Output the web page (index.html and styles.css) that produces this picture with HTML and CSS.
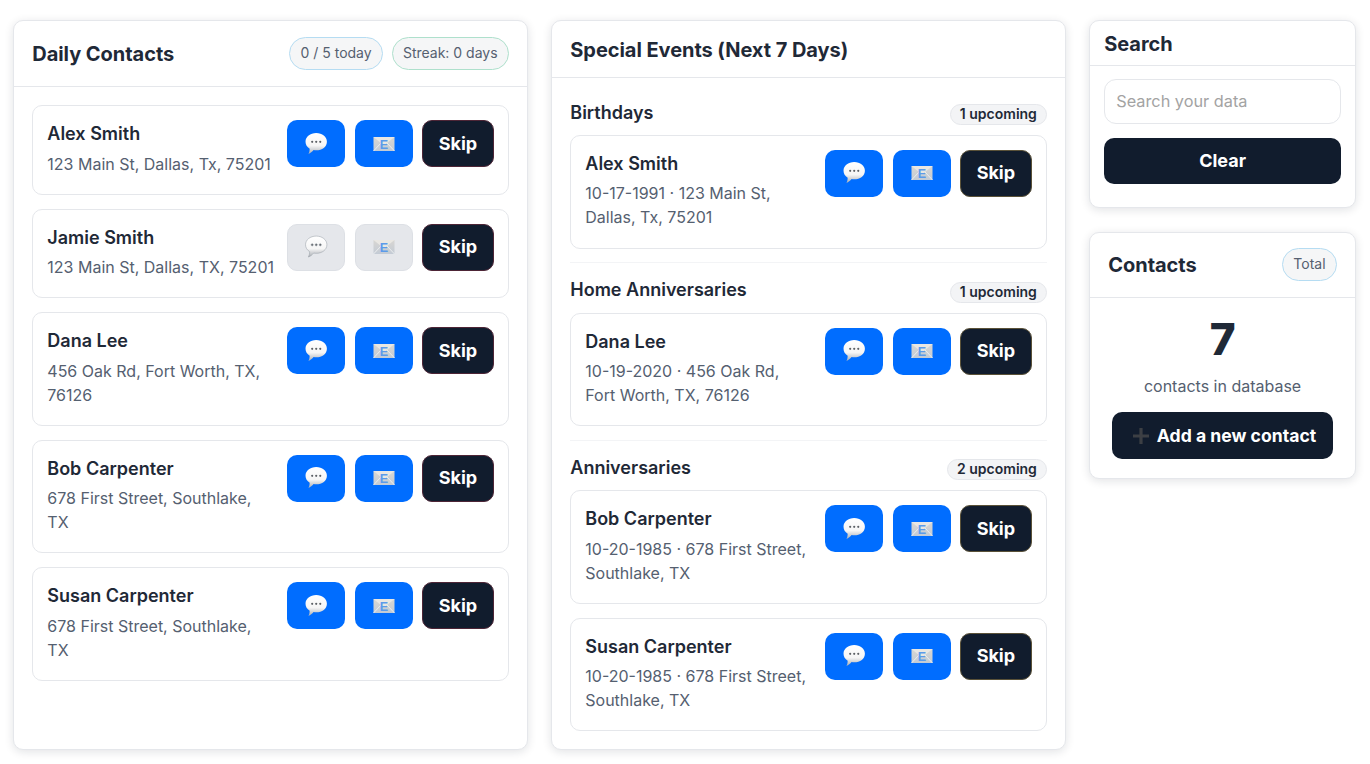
FILE: index.html
```html
<!DOCTYPE html>
<html lang="en">
<head>
    <title>Daily Contacts</title>
    <meta charset="utf-8">
    <meta name="viewport" content="width=device-width, initial-scale=1">
    <link rel="stylesheet" href="styles.css">
</head>
<body>
    <svg class="icon-defs" width="0" height="0" aria-hidden="true">
        <defs>
            <linearGradient id="bubble-fill" x1="0" y1="0" x2="0" y2="1">
                <stop offset="0" stop-color="#ffffff"/>
                <stop offset="0.6" stop-color="#f6f6f6"/>
                <stop offset="1" stop-color="#a9adb3"/>
            </linearGradient>
            <linearGradient id="envelope-fill" x1="0" y1="0" x2="0" y2="1">
                <stop offset="0" stop-color="#d8d6d2"/>
                <stop offset="1" stop-color="#c3cbd5"/>
            </linearGradient>
            <symbol id="icon-chat" viewBox="0 0 22 22">
                <path d="M11.200 1c5.500 0 9.800 3.400 9.800 7.900s-4.300 7.900-9.800 7.900c-.8 0-1.600-.1-2.400-.2-1.300 1.600-2.800 2.900-4.800 3.600.8-1.400 1.200-3 1.200-4.900C2.800 13.800 1.400 11.500 1.400 8.900 1.400 4.400 5.700 1 11.200 1z" fill="url(#bubble-fill)"/>
                <circle cx="7.500" cy="9" r="1" fill="#5d6166"/>
                <circle cx="11.200" cy="9" r="1" fill="#5d6166"/>
                <circle cx="14.900" cy="9" r="1" fill="#5d6166"/>
            </symbol>
            <symbol id="icon-mail" viewBox="0 0 22 16">
                <rect x="0.500" y="1" width="21" height="14" fill="url(#envelope-fill)"/>
                <path d="M0.500 1 11 9.500 21.500 1z" fill="#e9e7e3"/>
                <path d="M0.500 15 8 7M21.500 15 14 7" stroke="#eef0f2" stroke-width="0.900" fill="none"/>
                <text x="11" y="12.600" text-anchor="middle" class="icon-letter">E</text>
            </symbol>
        </defs>
    </svg>

    <main class="dashboard">
        <section class="card">
            <header class="card-head card-head-daily">
                <h2>Daily Contacts</h2>
                <div class="pills">
                    <span class="pill pill-blue">0 / 5 today</span>
                    <span class="pill pill-green">Streak: 0 days</span>
                </div>
            </header>
            <div class="card-body list">
                <article class="row">
                    <div class="info">
                        <div class="name">Alex Smith</div>
                        <div class="details">123 Main St, Dallas, Tx, 75201</div>
                    </div>
                    <div class="actions">
                        <button class="btn btn-icon"><svg class="chat"><use href="#icon-chat"/></svg></button>
                        <button class="btn btn-icon"><svg class="mail"><use href="#icon-mail"/></svg></button>
                        <button class="btn btn-skip">Skip</button>
                    </div>
                </article>
                <article class="row">
                    <div class="info">
                        <div class="name">Jamie Smith</div>
                        <div class="details">123 Main St, Dallas, TX, 75201</div>
                    </div>
                    <div class="actions">
                        <button class="btn btn-icon is-off"><svg class="chat"><use href="#icon-chat"/></svg></button>
                        <button class="btn btn-icon is-off"><svg class="mail"><use href="#icon-mail"/></svg></button>
                        <button class="btn btn-skip">Skip</button>
                    </div>
                </article>
                <article class="row">
                    <div class="info">
                        <div class="name">Dana Lee</div>
                        <div class="details">456 Oak Rd, Fort Worth, TX, 76126</div>
                    </div>
                    <div class="actions">
                        <button class="btn btn-icon"><svg class="chat"><use href="#icon-chat"/></svg></button>
                        <button class="btn btn-icon"><svg class="mail"><use href="#icon-mail"/></svg></button>
                        <button class="btn btn-skip">Skip</button>
                    </div>
                </article>
                <article class="row">
                    <div class="info">
                        <div class="name">Bob Carpenter</div>
                        <div class="details">678 First Street, Southlake, TX</div>
                    </div>
                    <div class="actions">
                        <button class="btn btn-icon"><svg class="chat"><use href="#icon-chat"/></svg></button>
                        <button class="btn btn-icon"><svg class="mail"><use href="#icon-mail"/></svg></button>
                        <button class="btn btn-skip">Skip</button>
                    </div>
                </article>
                <article class="row">
                    <div class="info">
                        <div class="name">Susan Carpenter</div>
                        <div class="details">678 First Street, Southlake, TX</div>
                    </div>
                    <div class="actions">
                        <button class="btn btn-icon"><svg class="chat"><use href="#icon-chat"/></svg></button>
                        <button class="btn btn-icon"><svg class="mail"><use href="#icon-mail"/></svg></button>
                        <button class="btn btn-skip">Skip</button>
                    </div>
                </article>
            </div>
        </section>

        <section class="card">
            <header class="card-head card-head-events">
                <h2>Special Events (Next 7 Days)</h2>
            </header>
            <div class="card-body events">
                <div class="event-group">
                    <div class="group-head">
                        <h3>Birthdays</h3>
                        <span class="count">1 upcoming</span>
                    </div>
                    <article class="row">
                        <div class="info">
                            <div class="name">Alex Smith</div>
                            <div class="details">10-17-1991 &middot; 123 Main St, Dallas, Tx, 75201</div>
                        </div>
                        <div class="actions">
                            <button class="btn btn-icon"><svg class="chat"><use href="#icon-chat"/></svg></button>
                            <button class="btn btn-icon"><svg class="mail"><use href="#icon-mail"/></svg></button>
                            <button class="btn btn-skip btn-skip-gold">Skip</button>
                        </div>
                    </article>
                </div>
                <div class="event-group">
                    <div class="group-head">
                        <h3>Home Anniversaries</h3>
                        <span class="count">1 upcoming</span>
                    </div>
                    <article class="row">
                        <div class="info">
                            <div class="name">Dana Lee</div>
                            <div class="details">10-19-2020 &middot; 456 Oak Rd, Fort Worth, TX, 76126</div>
                        </div>
                        <div class="actions">
                            <button class="btn btn-icon"><svg class="chat"><use href="#icon-chat"/></svg></button>
                            <button class="btn btn-icon"><svg class="mail"><use href="#icon-mail"/></svg></button>
                            <button class="btn btn-skip btn-skip-gold">Skip</button>
                        </div>
                    </article>
                </div>
                <div class="event-group">
                    <div class="group-head">
                        <h3>Anniversaries</h3>
                        <span class="count">2 upcoming</span>
                    </div>
                    <article class="row">
                        <div class="info">
                            <div class="name">Bob Carpenter</div>
                            <div class="details">10-20-1985 &middot; 678 First Street, Southlake, TX</div>
                        </div>
                        <div class="actions">
                            <button class="btn btn-icon"><svg class="chat"><use href="#icon-chat"/></svg></button>
                            <button class="btn btn-icon"><svg class="mail"><use href="#icon-mail"/></svg></button>
                            <button class="btn btn-skip btn-skip-gold">Skip</button>
                        </div>
                    </article>
                    <article class="row">
                        <div class="info">
                            <div class="name">Susan Carpenter</div>
                            <div class="details">10-20-1985 &middot; 678 First Street, Southlake, TX</div>
                        </div>
                        <div class="actions">
                            <button class="btn btn-icon"><svg class="chat"><use href="#icon-chat"/></svg></button>
                            <button class="btn btn-icon"><svg class="mail"><use href="#icon-mail"/></svg></button>
                            <button class="btn btn-skip btn-skip-gold">Skip</button>
                        </div>
                    </article>
                </div>
            </div>
        </section>

        <aside class="sidebar">
            <section class="card">
                <header class="card-head card-head-search">
                    <h2>Search</h2>
                </header>
                <div class="card-body search-body">
                    <input class="search-input" type="text" placeholder="Search your data">
                    <button class="btn btn-wide">Clear</button>
                </div>
            </section>
            <section class="card">
                <header class="card-head card-head-total">
                    <h2>Contacts</h2>
                    <span class="pill pill-blue">Total</span>
                </header>
                <div class="card-body total-body">
                    <div class="total-number">7</div>
                    <div class="total-label">contacts in database</div>
                    <button class="btn btn-add">
                        <svg class="plus" viewBox="0 0 16 16"><path d="M6.400 0h3.200v6.400H16v3.200H9.600V16H6.400V9.600H0V6.400h6.400z"/></svg>
                        Add a new contact
                    </button>
                </div>
            </section>
        </aside>
    </main>
</body>
</html>
```

FILE: styles.css
```css
* {
    box-sizing: border-box;
}

html, body {
    height: 100%;
}

body {
    margin: 0;
    background: #ffffff;
    color: #1f2937;
    font-family: Inter, "Noto Sans", sans-serif;
    font-size: 16px;
    line-height: 1.5;
}

h2, h3 {
    margin: 0;
    color: #1f2937;
}

h2 {
    font-size: 20px;
    font-weight: 700;
    line-height: 1.25;
    letter-spacing: -0.05px;
}

h3 {
    font-size: 18px;
    font-weight: 600;
    line-height: 25px;
}

.icon-defs {
    position: absolute;
}

.icon-letter {
    fill: #5b9bea;
    font-family: "Liberation Sans", sans-serif;
    font-size: 12.500px;
    font-weight: 700;
}

.dashboard {
    display: grid;
    grid-template-columns: 514.600px 514.600px 266.600px;
    gap: 23.400px;
    height: 764px;
    padding: 20px 14px 14.500px 13.300px;
}

.card {
    background: #fff;
    border: 1px solid #e5e7eb;
    border-radius: 10px;
    box-shadow: 0 2px 10px rgba(17, 28, 45, 0.12);
}

.card-head {
    display: flex;
    align-items: center;
    justify-content: space-between;
    border-bottom: 1px solid #e5e7eb;
}

.card-head-daily {
    height: 66px;
    padding: 2px 18px 0;
}

.card-head-events {
    height: 57px;
    padding: 2px 18px 0;
}

.card-head-search {
    height: 45px;
    padding: 2px 14px 0;
}

.card-head-total {
    height: 65px;
    padding: 0 18px;
}

.pills {
    display: flex;
    gap: 8.700px;
}

.pill {
    margin-top: -2px;
    padding: 3px 10.300px 5px;
    background: #f5f6f7;
    border: 1px solid;
    border-radius: 999px;
    color: #556070;
    font-size: 14px;
    line-height: 23px;
}

.pill-blue {
    border-color: #b5dcf2;
}

.pill-green {
    border-color: #aee0cc;
}

.card-body {
    padding: 18px;
}

.list {
    display: flex;
    flex-direction: column;
    gap: 14px;
    padding-top: 18.100px;
}

.row {
    display: flex;
    align-items: flex-start;
    gap: 12px;
    padding: 14px 14px 18.100px;
    background: #fff;
    border: 1px solid #e5e7eb;
    border-radius: 10px;
}

.row + .row {
    margin-top: 14px;
}

.list .row + .row {
    margin-top: 0;
}

.info {
    flex: 1;
    min-width: 0;
}

.name {
    margin-bottom: 4.500px;
    color: #1f2937;
    font-size: 18px;
    font-weight: 600;
    line-height: 1.5;
}

.details {
    color: #556070;
    font-size: 16px;
    line-height: 24px;
}

.actions {
    display: flex;
    flex: none;
    gap: 9.200px;
}

.btn {
    display: inline-flex;
    align-items: center;
    justify-content: center;
    border: 1px solid transparent;
    border-radius: 10px;
    background: #111c2d;
    color: #fff;
    font-family: inherit;
    font-size: 18px;
    font-weight: 700;
    line-height: 1;
}

.btn-icon {
    width: 58.200px;
    height: 47px;
    padding: 0;
    background: #006dff;
}

.btn-icon.is-off {
    background: #e5e7eb;
    border-color: #dde0e5;
}

.is-off .chat {
    stroke: #9aa0a8;
    stroke-width: 0.500;
}

.chat {
    width: 24px;
    height: 24px;
}

.mail {
    width: 22px;
    height: 16px;
}

.btn-skip {
    width: 72px;
    height: 47px;
    padding: 0;
    border-color: #4d2536;
}

.btn-skip-gold {
    border-color: #5a5138;
}

.events {
    display: flex;
    flex-direction: column;
    gap: 14px;
    padding-top: 21.600px;
}

.event-group {
    display: flex;
    flex-direction: column;
    padding-bottom: 13.600px;
    border-bottom: 1px solid #f3f4f6;
}

.event-group:last-child {
    padding-bottom: 0;
    border-bottom: 0;
}

.group-head {
    display: flex;
    align-items: flex-end;
    justify-content: space-between;
    height: 25.400px;
    margin-bottom: 10px;
}

.group-head h3 {
    align-self: flex-start;
}

.count {
    padding: 0 9px 1px;
    background: #f3f4f6;
    border: 1px solid #e5e7eb;
    border-radius: 999px;
    color: #1f2937;
    font-size: 14px;
    font-weight: 600;
    line-height: 18px;
}

.sidebar {
    display: flex;
    flex-direction: column;
    align-items: stretch;
    gap: 24px;
}

.search-body {
    display: flex;
    flex-direction: column;
    gap: 14px;
    padding: 13px 14px 23px;
}

.search-input {
    width: 100%;
    height: 45px;
    padding: 0 11px 2px;
    background: #fff;
    border: 1px solid #e5e7eb;
    border-radius: 12px;
    color: #1f2937;
    font-family: inherit;
    font-size: 16.300px;
}

.search-input::placeholder {
    color: #a3a3a3;
}

.btn-wide {
    width: 100%;
    height: 46px;
}

.total-body {
    display: flex;
    flex-direction: column;
    align-items: center;
    padding: 14px 18px 19px;
}

.total-number {
    color: #1f2937;
    font-size: 44px;
    font-weight: 800;
    line-height: 54px;
}

.total-label {
    margin-top: 8px;
    color: #556070;
    font-size: 16px;
    line-height: 24px;
}

.btn-add {
    gap: 8px;
    width: 221px;
    height: 47px;
    margin-top: 14px;
    padding-left: 10px;
    font-size: 17.600px;
}

.plus {
    width: 16px;
    height: 16px;
    fill: #3c3f44;
}
```
